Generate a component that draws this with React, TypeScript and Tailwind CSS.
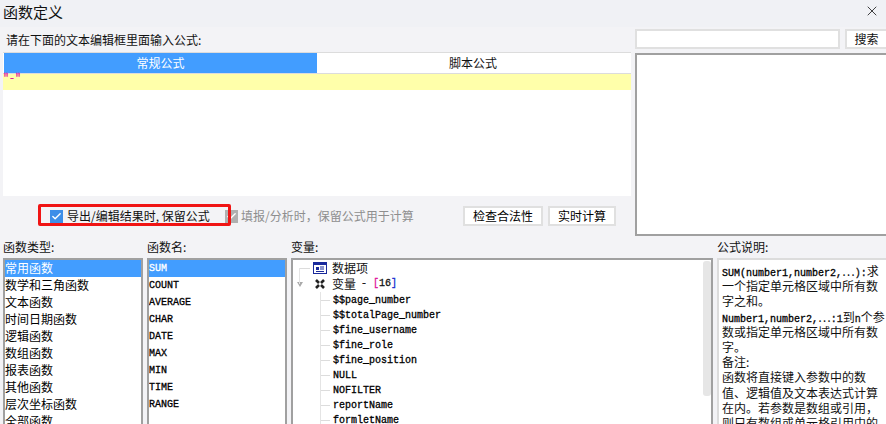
import { Check, X } from "lucide-react";

const cjk = "font-['Noto_Sans_CJK_SC','Liberation_Sans',sans-serif]";
const mono = "font-['Liberation_Mono','Noto_Sans_CJK_SC',monospace] [-webkit-text-stroke-width:0.3px]";

const types = ["常用函数", "数学和三角函数", "文本函数", "时间日期函数", "逻辑函数", "数组函数", "报表函数", "其他函数", "层次坐标函数", "全部函数"];
const names = ["SUM", "COUNT", "AVERAGE", "CHAR", "DATE", "MAX", "MIN", "TIME", "RANGE"];
const vars = ["$$page_number", "$$totalPage_number", "$fine_username", "$fine_role", "$fine_position", "NULL", "NOFILTER", "reportName", "formletName"];

function ListBox({ items, code, width }: { items: string[]; code?: boolean; width: string }) {
  return (
    <div className={`${width} h-[170px] shrink-0 overflow-hidden border-2 border-b-0 border-[#a0a0a0] bg-white`}>
      {items.map((item, i) => (
        <div
          key={item}
          className={`h-[17px] text-xs whitespace-nowrap ${code ? `${mono} text-[10px] leading-[17px]` : "leading-[15px]"} ${
            i === 0 ? "bg-[#429dff] text-white" : "text-black"
          }`}
        >
          {item}
        </div>
      ))}
    </div>
  );
}

function FieldButton({ label, width }: { label: string; width: string }) {
  return (
    <button className={`${width} h-5 border-2 border-[#e0e0e0] bg-white text-xs leading-none text-black`}>
      {label}
    </button>
  );
}

function NoteLine({ children }: { children: React.ReactNode }) {
  return <div className="h-[15.2px]">{children}</div>;
}

export default function App() {
  return (
    <div className={`${cjk} flex h-[424px] w-[886px] flex-col overflow-hidden bg-[#f3f3f6] text-[#111]`}>
      <div className="flex h-[27px] shrink-0 items-center justify-between bg-[#f0f1f5] pb-[5px] pl-[3px] pr-[6px]">
        <span className="text-[15px] leading-none">函数定义</span>
        <X size={16} strokeWidth={1.2} />
      </div>

      <div className="flex h-[209px] shrink-0">
        <div className="flex w-[635px] shrink-0 flex-col pl-[3px] pr-1">
          <div className="h-[25px] pl-[3px] pt-[5px] text-xs leading-[16px]">请在下面的文本编辑框里面输入公式:</div>
          <div className="flex h-[22px] shrink-0 border-y border-[#dcdcdc] bg-white text-xs leading-[20px]">
            <div className="ml-px w-[313px] bg-[#429dff] text-center text-white">常规公式</div>
            <div className="flex-1 pr-0.5 text-center">脚本公式</div>
          </div>
          <div className={`${mono} h-4 bg-[#ffffaa] text-[10px] leading-[9px] text-[#e0169c]`}>"-"</div>
          <div className="h-[106px] bg-white" />
          <div className="relative flex h-10 items-center">
            <div className="absolute left-[35px] top-2 h-[22px] w-[193px] rounded-[2px] border-[3px] border-[#f01414]" />
            <span className="ml-[47px] flex h-[13px] w-[13px] items-center justify-center bg-[#3d8ee8]">
              <Check size={11} strokeWidth={3} className="text-white" />
            </span>
            <span className="ml-1 w-[158px] text-xs whitespace-nowrap">导出/编辑结果时, 保留公式</span>
            <span className="flex h-[13px] w-[13px] items-center justify-center bg-[#b0b0b0]">
              <Check size={11} strokeWidth={3} className="text-white" />
            </span>
            <span className="ml-[3px] w-[222px] text-xs whitespace-nowrap text-[#8e8e8e]">{"填报/分析时\uFF0C保留公式用于计算"}</span>
            <FieldButton label="检查合法性" width="w-20" />
            <span className="w-[5px]" />
            <FieldButton label="实时计算" width="w-[68px]" />
          </div>
        </div>
        <div className="flex min-w-0 flex-1 flex-col">
          <div className="flex h-[26px] shrink-0 items-start gap-[5px] pt-0.5">
            <div className="h-5 w-[205px] border-2 border-[#e0e0e0] bg-white" />
            <button className="h-5 flex-1 border-2 border-r-0 border-[#e0e0e0] bg-white text-xs leading-none">搜索</button>
          </div>
          <div className="h-[183px] border-2 border-r-0 border-[#a0a0a0] bg-white" />
        </div>
      </div>

      <div className="flex h-[22px] shrink-0 items-center text-xs">
        <span className="ml-[3px] w-[144px]">函数类型:</span>
        <span className="w-[144px]">函数名:</span>
        <span className="w-[426px]">变量:</span>
        <span>公式说明:</span>
      </div>

      <div className="flex min-h-0 flex-1 gap-1 pl-[3px]">
        <ListBox items={types} width="w-[140px]" />
        <ListBox items={names} code width="w-[140px]" />
        <div className="flex h-[170px] w-[422px] shrink-0 border-x-2 border-t-2 border-[#a0a0a0] bg-white">
          <div className="relative min-w-0 flex-1 overflow-hidden">
            <div className="absolute left-[6px] top-2 h-4 w-px bg-[#e4e4e4]" />
            <div className="absolute bottom-0 left-[27px] top-8 w-px bg-[#e4e4e4]" />
            <div className="flex h-4 items-center text-xs">
              <span className="ml-[6px] h-px w-[11px] bg-[#dcdcdc]" />
              <svg width="14" height="12" viewBox="0 0 14 12" className="ml-[3px] shrink-0">
                <rect x="0.5" y="0.5" width="13" height="11" fill="#fff" stroke="#1a2a9c" />
                <rect x="1" y="1" width="12" height="2" fill="#1a2a9c" />
                <rect x="3" y="5" width="3" height="3" fill="#1a2a9c" />
                <path d="M7 5h4M7 7h4M3 9.5h8" stroke="#1a2a9c" />
              </svg>
              <span className="ml-[5px]">数据项</span>
            </div>
            <div className="flex h-4 items-center text-xs">
              <svg width="6" height="5" viewBox="0 0 6 5" className="ml-1 shrink-0">
                <path d="M0 0h6L3 5z" fill="#aaa" />
              </svg>
              <svg width="10" height="10" viewBox="0 0 10 10" className="ml-3 shrink-0">
                <path d="M1 1l3 3M9 1L6 4M1 9l3-3M9 9L6 6" stroke="#222" strokeWidth="2.6" />
              </svg>
              <span className="ml-[7px]">变量</span>
              <span className={`${mono} ml-[5px] text-[10px]`}>
                - <span className="text-[#e0169c]">[</span>16<span className="text-[#2030d0]">]</span>
              </span>
            </div>
            <div className="mt-px">
              {vars.map((name) => (
                <div key={name} className="flex h-[15px] items-center">
                  <span className="ml-[27px] h-px w-[10px] shrink-0 bg-[#dcdcdc]" />
                  <span className={`${mono} ml-[3px] text-[10px] text-black whitespace-nowrap`}>{name}</span>
                </div>
              ))}
            </div>
          </div>
          <div className="w-2 shrink-0">
            <div className="mt-px h-[135px] rounded-[3px] bg-[#e6e6e6]" />
          </div>
        </div>
        <div className="h-[170px] min-w-0 flex-1 overflow-hidden border-t-2 border-l-2 border-[#dcdcdc] bg-white pl-[3px] pt-[3px] text-xs leading-[15.2px] whitespace-nowrap">
          <NoteLine>
            <span className={`${mono} text-[10px] text-black`}>SUM(number1,number2,</span>…<span className={`${mono} text-[10px]`}>):</span>求
          </NoteLine>
          <NoteLine>一个指定单元格区域中所有数</NoteLine>
          <NoteLine>字之和。</NoteLine>
          <NoteLine>
            <span className={`${mono} text-[10px] text-black`}>Number1,number2,</span>…<span className={`${mono} text-[10px]`}>:1</span>到<span className={`${mono} text-[10px]`}>n</span>个参
          </NoteLine>
          <NoteLine>数或指定单元格区域中所有数</NoteLine>
          <NoteLine>字。</NoteLine>
          <NoteLine>备注:</NoteLine>
          <NoteLine>函数将直接键入参数中的数</NoteLine>
          <NoteLine>值、逻辑值及文本表达式计算</NoteLine>
          <NoteLine>{"在内。若参数是数组或引用\uFF0C"}</NoteLine>
          <NoteLine>则只有数组或单元格引用中的</NoteLine>
        </div>
      </div>
    </div>
  );
}
